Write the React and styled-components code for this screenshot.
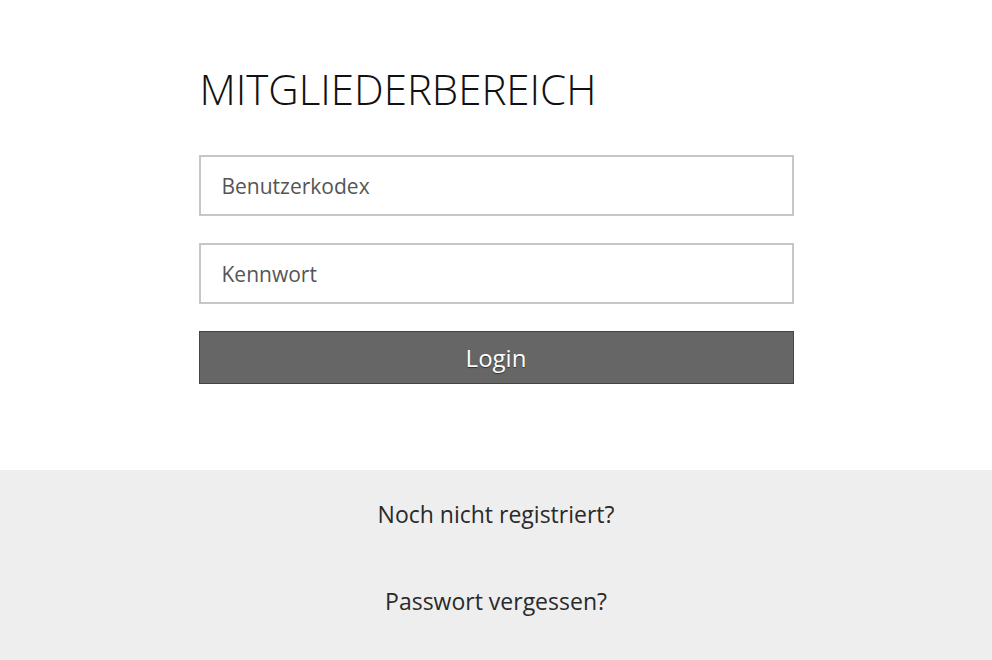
import React from "react";
import styled, { createGlobalStyle } from "styled-components";

const Global = createGlobalStyle`
  html, body { margin: 0; padding: 0; background: #fff; }
  body { font-family: "Open Sans", "Noto Sans", sans-serif; }
  * { box-sizing: border-box; }
`;

const Page = styled.div`
  width: 992px;
  height: 660px;
  display: flex;
  flex-direction: column;
  overflow: hidden;
`;

const Main = styled.section`
  height: 470px;
  display: flex;
  justify-content: center;
  padding-top: 66px;
`;

const Form = styled.form`
  width: 595px;
  display: flex;
  flex-direction: column;
`;

const Title = styled.h1`
  margin: 0 0 43px 1px;
  font-family: "Open Sans", sans-serif;
  font-weight: 300;
  font-size: 42px;
  line-height: 46px;
  color: #111;
`;

const Input = styled.input`
  height: 61px;
  width: 100%;
  border: 2px solid #c6c6c6;
  background: #fff;
  padding: 0 21px;
  font-family: "Open Sans", sans-serif;
  font-size: 21px;
  color: #444;
  margin-bottom: 27px;
  outline: none;
  &::placeholder { color: #555; opacity: 1; }
`;

const Button = styled.button`
  height: 53px;
  width: 100%;
  border: 1px solid #454545;
  background: #666;
  color: #fff;
  font-family: "Open Sans", sans-serif;
  font-size: 24px;
  text-shadow: 0 1px 1px rgba(0,0,0,0.5);
  cursor: pointer;
  padding: 0;
`;

const Footer = styled.section`
  flex: 1;
  background: #eeeeee;
  display: flex;
  flex-direction: column;
  align-items: center;
  padding-top: 28px;
  gap: 55px;
`;

const FooterLink = styled.a`
  font-family: "Open Sans", sans-serif;
  font-size: 23px;
  line-height: 32px;
  color: #2a2a2a;
  text-decoration: none;
`;

export default function App() {
  return (
    <Page>
      <Global />
      <Main>
        <Form onSubmit={(e) => e.preventDefault()}>
          <Title>MITGLIEDERBEREICH</Title>
          <Input placeholder="Benutzerkodex" />
          <Input type="password" placeholder="Kennwort" />
          <Button type="submit">Login</Button>
        </Form>
      </Main>
      <Footer>
        <FooterLink href="#">Noch nicht registriert?</FooterLink>
        <FooterLink href="#">Passwort vergessen?</FooterLink>
      </Footer>
    </Page>
  );
}
